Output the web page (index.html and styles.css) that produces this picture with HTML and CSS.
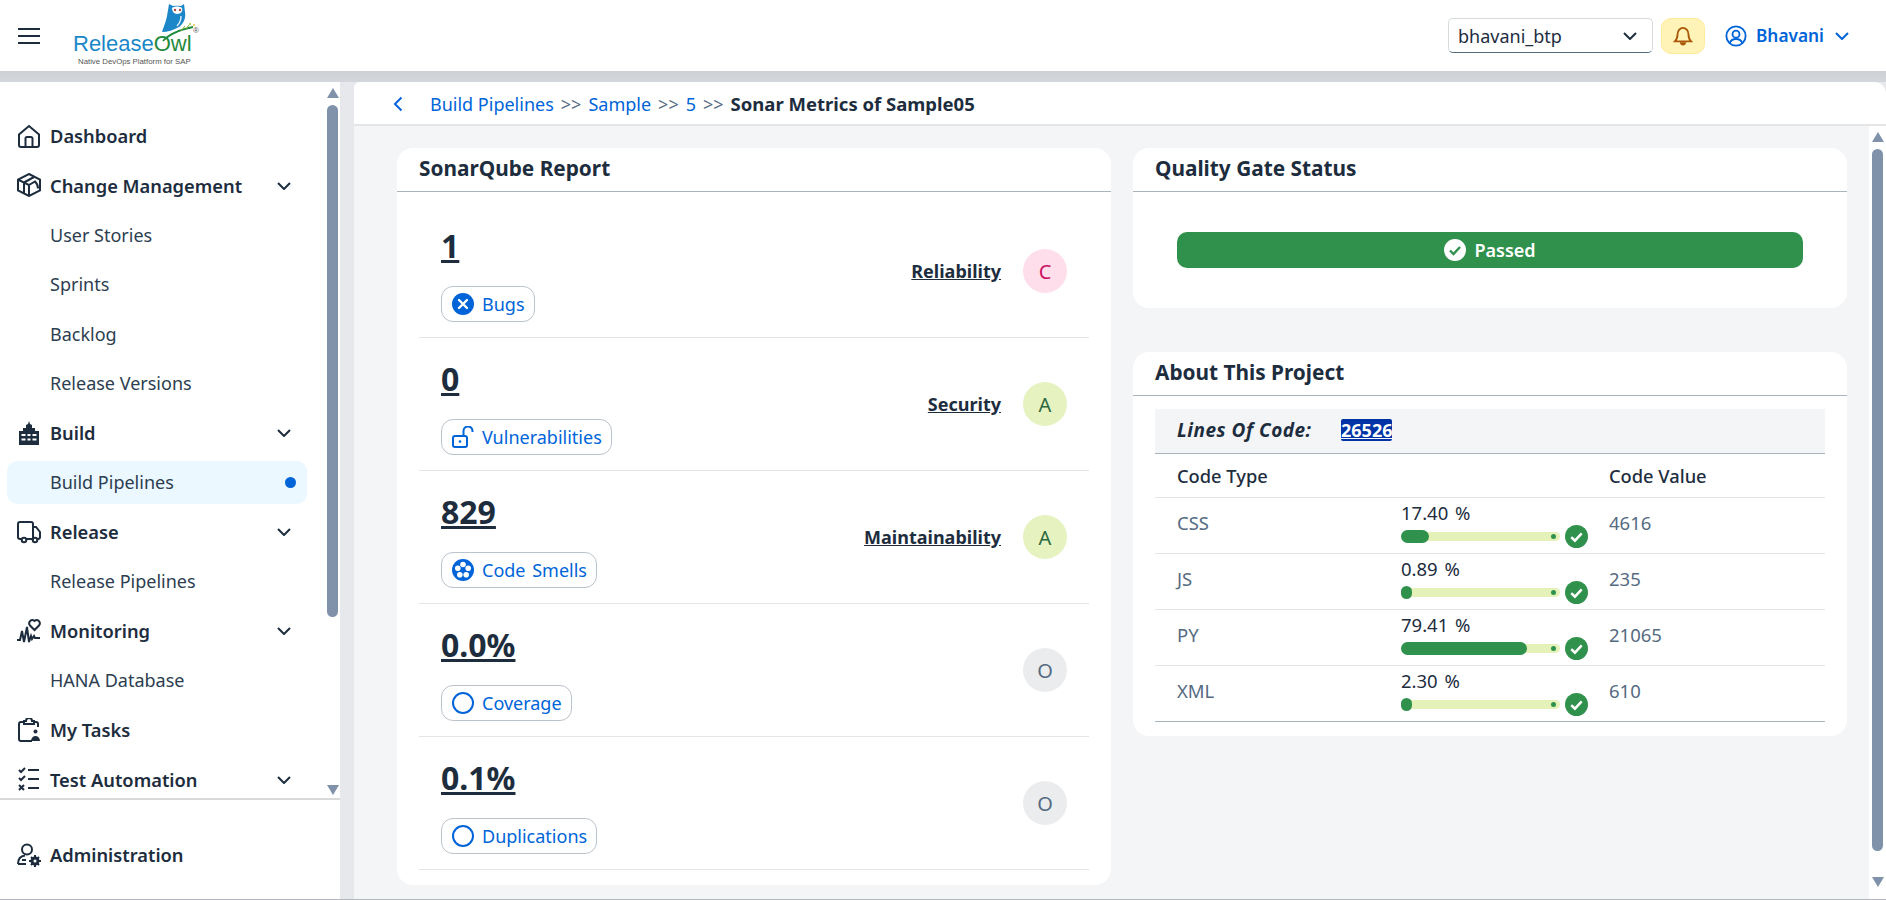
FILE: index.html
```html
<!DOCTYPE html>
<html lang="en">
<head>
    <meta charset="UTF-8">
    <meta name="viewport" content="width=device-width, initial-scale=1.0">
    <title>Sonar Metrics of Sample05</title>
    <link rel="stylesheet" href="styles.css">
</head>
<body>

    <header class="topbar">
        <svg class="hamburger" viewBox="0 0 22 16"><path d="M0 1h22M0 8h22M0 15h22"/></svg>
        <div class="logo">
            <svg class="owl" viewBox="0 0 40 40">
                <path fill="#1b87c9" d="M12 2l4 2c3-.5 6-.5 8 0l3-2 1 8c1 6-1 11-6 15-5 3-12 5-17 5 1-4 4-10 5-16z"/>
                <path fill="#fff" d="M15 6c2-2 8-2 10 0 1 3-1 6-5 6-3 0-5-3-5-6z"/>
                <circle cx="18" cy="8" r="1.200" fill="#b5483a"/>
                <circle cx="23" cy="8" r="1.200" fill="#b5483a"/>
                <path fill="none" stroke="#d6ecf8" stroke-width="1.400" d="M24 14c0 4-1 7-4 10"/>
                <path fill="none" stroke="#1f8a3c" stroke-width="1.800" d="M6 39c6-7 16-11 30-14"/>
                <path fill="none" stroke="#7fb53a" stroke-width="1" d="M24 29l4-5M29 27l3-4"/>
                <circle cx="33" cy="22" r="1" fill="#a6c93a"/>
                <circle cx="37" cy="23" r="1" fill="#e3c93a"/>
            </svg>
            <div class="logo-name"><span class="logo-release">Release</span><span class="logo-owl">Owl</span></div>
            <span class="logo-reg">®</span>
            <div class="logo-tag">Native DevOps Platform for SAP</div>
        </div>
        <div class="topbar-right">
            <div class="tenant">
                <span>bhavani_btp</span>
                <svg class="chev chev-dark" viewBox="0 0 14 8"><path d="M1 1l6 6 6-6"/></svg>
            </div>
            <div class="bell">
                <svg viewBox="0 0 22 24"><path fill="none" stroke="#aa5808" stroke-width="2" d="M2 18h18c-2-2-3-4-3-8 0-4-3-7-6-7s-6 3-6 7c0 4-1 6-3 8z"/><path fill="#aa5808" d="M7.500 19h7c0 2-1.500 3.500-3.500 3.500s-3.500-1.500-3.500-3.500z"/></svg>
            </div>
            <div class="user">
                <svg viewBox="0 0 24 24" fill="none" stroke="#0064d9" stroke-width="2"><circle cx="12" cy="12" r="10.500"/><circle cx="12" cy="10" r="3.800"/><path d="M5 19.500c1.500-3 4-4.200 7-4.200s5.500 1.200 7 4.200"/></svg>
                <span>Bhavani</span>
                <svg class="chev chev-blue" viewBox="0 0 14 8"><path d="M1 1l6 6 6-6"/></svg>
            </div>
        </div>
    </header>
    <div class="topbar-shadow"></div>

    <div class="layout">
        <aside class="sidebar">
            <div class="sidebar-top">
                <nav class="nav">
                    <a class="nav-head">
                        <svg class="nav-icon" viewBox="0 0 24 24"><path d="M2 21V10.500L12 2l10 8.500V21a2 2 0 0 1-2 2H4a2 2 0 0 1-2-2zM8.500 23v-8.500a1.500 1.500 0 0 1 1.500-1.500h4a1.500 1.500 0 0 1 1.500 1.500V23"/></svg>
                        Dashboard
                    </a>
                    <a class="nav-head">
                        <svg class="nav-icon" viewBox="0 0 24 24"><path d="M12 1 23 6.500v11L12 23 1 17.500v-11zM1 6.500 7 9.500v11M7 9.500 17 4M7 9.500l5 2.500v10M12 12l6-3.500c2 2 3 4 3 7"/></svg>
                        Change Management
                        <svg class="chev chev-dark nav-chev" viewBox="0 0 14 8"><path d="M1 1l6 6 6-6"/></svg>
                    </a>
                    <a class="nav-sub">User Stories</a>
                    <a class="nav-sub">Sprints</a>
                    <a class="nav-sub">Backlog</a>
                    <a class="nav-sub">Release Versions</a>
                    <a class="nav-head">
                        <svg class="nav-icon nav-icon-solid" viewBox="0 0 24 24"><path d="M12 0l1 3 2 1v3h3v3h4v14H2V10h4V7h3V4l2-1zM4.500 13v2h4v-2zm6 0v2h3v-2zm5 0v2h4v-2zm-11 4.500v2h4v-2zm6 0v2h3v-2zm5 0v2h4v-2z"/></svg>
                        Build
                        <svg class="chev chev-dark nav-chev" viewBox="0 0 14 8"><path d="M1 1l6 6 6-6"/></svg>
                    </a>
                    <a class="nav-sub nav-active">Build Pipelines<span class="nav-dot"></span></a>
                    <a class="nav-head">
                        <svg class="nav-icon" viewBox="0 0 24 24"><path d="M5 19H3a2 2 0 0 1-2-2V4a2 2 0 0 1 2-2h11a2 2 0 0 1 2 2v15H9M16 7h3l4 5v5a2 2 0 0 1-2 2h-1M12 19h-2"/><circle cx="7" cy="20" r="2.300"/><circle cx="18" cy="20" r="2.300"/></svg>
                        Release
                        <svg class="chev chev-dark nav-chev" viewBox="0 0 14 8"><path d="M1 1l6 6 6-6"/></svg>
                    </a>
                    <a class="nav-sub">Release Pipelines</a>
                    <a class="nav-head">
                        <svg class="nav-icon" viewBox="0 0 24 24"><path d="M0 21h3l2-9 2 11 3-15 2 15 2-6 1 3 2-3 1 2h5M13 6.500c-2.500-3.500 1.500-7 4.500-4.500 3-2.500 7 1 4.500 4.500l-4.500 4.500z"/></svg>
                        Monitoring
                        <svg class="chev chev-dark nav-chev" viewBox="0 0 14 8"><path d="M1 1l6 6 6-6"/></svg>
                    </a>
                    <a class="nav-sub">HANA Database</a>
                    <a class="nav-head">
                        <svg class="nav-icon" viewBox="0 0 24 24"><path d="M15 23H4a2 2 0 0 1-2-2V6a2 2 0 0 1 2-2h3M17 4h2a2 2 0 0 1 2 2v3M7 6V3h2a3 3 0 0 1 6 0h2v3z"/><circle class="nav-fill" cx="18.500" cy="13.500" r="2"/><path class="nav-fill" d="M14 23c0-3 2-5 4.500-5s4.500 2 4.500 5z"/></svg>
                        My Tasks
                    </a>
                    <a class="nav-head">
                        <svg class="nav-icon" viewBox="0 0 24 24"><path d="M2 3l2 2 4-4M11 3h11M2 11l2 2 4-4M11 12h11M2 18l5 5M7 18l-5 5M11 21h11"/></svg>
                        Test Automation
                        <svg class="chev chev-dark nav-chev" viewBox="0 0 14 8"><path d="M1 1l6 6 6-6"/></svg>
                    </a>
                </nav>
                <div class="scroll scroll-nav">
                    <span class="arrow-up"></span>
                    <span class="thumb"></span>
                    <span class="arrow-down"></span>
                </div>
            </div>
            <div class="sidebar-bottom">
                <a class="nav-head">
                    <svg class="nav-icon" viewBox="0 0 24 24"><circle cx="10" cy="6.500" r="5"/><path d="M1 21c0-5 3-8 7-8.500M1 21h8M5 17h4"/><circle class="nav-fill" cx="18" cy="18" r="4.500"/><path d="M18 12v3M18 21v3M12 18h3M21 18h3M14 14l2 2M20 20l2 2M22 14l-2 2M16 20l-2 2"/><circle class="nav-hole" cx="18" cy="18" r="1.500"/></svg>
                    Administration
                </a>
            </div>
        </aside>

        <main class="main">
            <div class="breadcrumb">
                <svg class="back" viewBox="0 0 10 16"><path d="M8.500 1.500 2 8l6.500 6.500"/></svg>
                <a>Build Pipelines</a><span class="crumb-sep">&gt;&gt;</span><a>Sample</a><span class="crumb-sep">&gt;&gt;</span><a>5</a><span class="crumb-sep">&gt;&gt;</span><strong>Sonar Metrics of Sample05</strong>
            </div>
            <div class="main-body">
                <div class="content">
                    <section class="card">
                        <h2 class="card-title">SonarQube Report</h2>
                        <div class="metrics">
                            <div class="metric">
                                <div class="metric-left">
                                    <div class="metric-num">1</div>
                                    <div class="chip">
                                        <svg viewBox="0 0 22 22"><circle cx="11" cy="11" r="11" fill="#0064d9"/><path d="M7 7l8 8M15 7l-8 8" stroke="#fff" stroke-width="2.400" stroke-linecap="round"/></svg>
                                        Bugs
                                    </div>
                                </div>
                                <div class="metric-right">
                                    <span class="metric-label">Reliability</span>
                                    <span class="grade grade-c">C</span>
                                </div>
                            </div>
                            <div class="metric">
                                <div class="metric-left">
                                    <div class="metric-num">0</div>
                                    <div class="chip">
                                        <svg viewBox="0 0 22 22" fill="none" stroke="#0064d9" stroke-width="2"><rect x="1" y="10" width="14" height="11" rx="2"/><circle cx="8" cy="15.500" r="1.300" fill="#0064d9" stroke="none"/><path d="M11.500 10V5a4.500 4.500 0 0 1 9 0v1"/></svg>
                                        Vulnerabilities
                                    </div>
                                </div>
                                <div class="metric-right">
                                    <span class="metric-label">Security</span>
                                    <span class="grade grade-a">A</span>
                                </div>
                            </div>
                            <div class="metric">
                                <div class="metric-left">
                                    <div class="metric-num">829</div>
                                    <div class="chip">
                                        <svg viewBox="0 0 22 22"><circle cx="11" cy="11" r="11" fill="#0064d9"/><circle cx="11" cy="5.500" r="2.800" fill="#fff"/><circle cx="5.800" cy="9.300" r="2.800" fill="#fff"/><circle cx="16.200" cy="9.300" r="2.800" fill="#fff"/><circle cx="7.800" cy="15.700" r="2.800" fill="#fff"/><circle cx="14.200" cy="15.700" r="2.800" fill="#fff"/></svg>
                                        Code Smells
                                    </div>
                                </div>
                                <div class="metric-right">
                                    <span class="metric-label">Maintainability</span>
                                    <span class="grade grade-a">A</span>
                                </div>
                            </div>
                            <div class="metric">
                                <div class="metric-left">
                                    <div class="metric-num">0.0%</div>
                                    <div class="chip">
                                        <svg viewBox="0 0 22 22"><circle cx="11" cy="11" r="10" fill="none" stroke="#0064d9" stroke-width="2"/></svg>
                                        Coverage
                                    </div>
                                </div>
                                <div class="metric-right">
                                    <span class="grade grade-o">O</span>
                                </div>
                            </div>
                            <div class="metric">
                                <div class="metric-left">
                                    <div class="metric-num">0.1%</div>
                                    <div class="chip">
                                        <svg viewBox="0 0 22 22"><circle cx="11" cy="11" r="10" fill="none" stroke="#0064d9" stroke-width="2"/></svg>
                                        Duplications
                                    </div>
                                </div>
                                <div class="metric-right">
                                    <span class="grade grade-o">O</span>
                                </div>
                            </div>
                        </div>
                    </section>

                    <div class="side-col">
                        <section class="card card-gate">
                            <h2 class="card-title">Quality Gate Status</h2>
                            <div class="gate-wrap">
                                <div class="gate">
                                    <svg viewBox="0 0 22 22"><circle cx="11" cy="11" r="11" fill="#fff"/><path d="M6 11.500l3.500 3.500L16 8" fill="none" stroke="#30914c" stroke-width="2.400"/></svg>
                                    Passed
                                </div>
                            </div>
                        </section>

                        <section class="card card-about">
                            <h2 class="card-title">About This Project</h2>
                            <div class="about">
                                <div class="loc">
                                    <em>Lines Of Code:</em>
                                    <span class="loc-val">26526</span>
                                </div>
                                <div class="code-row code-head">
                                    <span>Code Type</span><span></span><span>Code Value</span>
                                </div>
                                <div class="code-row">
                                    <span class="code-cell">CSS</span>
                                    <div class="usage">
                                        <div class="usage-pct">17.40 %</div>
                                        <div class="usage-bar">
                                            <div class="track"><span class="fill" style="width: 28px"></span><span class="track-end"></span></div>
                                            <svg class="ok" viewBox="0 0 22 22"><circle cx="11" cy="11" r="11" fill="#30914c"/><path d="M6 11.500l3.500 3.500L16 8" fill="none" stroke="#fff" stroke-width="2.400"/></svg>
                                        </div>
                                    </div>
                                    <span class="code-cell">4616</span>
                                </div>
                                <div class="code-row">
                                    <span class="code-cell">JS</span>
                                    <div class="usage">
                                        <div class="usage-pct">0.89 %</div>
                                        <div class="usage-bar">
                                            <div class="track"><span class="fill" style="width: 11px"></span><span class="track-end"></span></div>
                                            <svg class="ok" viewBox="0 0 22 22"><circle cx="11" cy="11" r="11" fill="#30914c"/><path d="M6 11.500l3.500 3.500L16 8" fill="none" stroke="#fff" stroke-width="2.400"/></svg>
                                        </div>
                                    </div>
                                    <span class="code-cell">235</span>
                                </div>
                                <div class="code-row">
                                    <span class="code-cell">PY</span>
                                    <div class="usage">
                                        <div class="usage-pct">79.41 %</div>
                                        <div class="usage-bar">
                                            <div class="track"><span class="fill" style="width: 126px"></span><span class="track-end"></span></div>
                                            <svg class="ok" viewBox="0 0 22 22"><circle cx="11" cy="11" r="11" fill="#30914c"/><path d="M6 11.500l3.500 3.500L16 8" fill="none" stroke="#fff" stroke-width="2.400"/></svg>
                                        </div>
                                    </div>
                                    <span class="code-cell">21065</span>
                                </div>
                                <div class="code-row code-last">
                                    <span class="code-cell">XML</span>
                                    <div class="usage">
                                        <div class="usage-pct">2.30 %</div>
                                        <div class="usage-bar">
                                            <div class="track"><span class="fill" style="width: 11px"></span><span class="track-end"></span></div>
                                            <svg class="ok" viewBox="0 0 22 22"><circle cx="11" cy="11" r="11" fill="#30914c"/><path d="M6 11.500l3.500 3.500L16 8" fill="none" stroke="#fff" stroke-width="2.400"/></svg>
                                        </div>
                                    </div>
                                    <span class="code-cell">610</span>
                                </div>
                            </div>
                        </section>
                    </div>
                </div>
                <div class="scroll scroll-main">
                    <span class="arrow-up"></span>
                    <span class="thumb"></span>
                    <span class="arrow-down"></span>
                </div>
            </div>
        </main>
    </div>

</body>
</html>
```

FILE: styles.css
```css
* { box-sizing: border-box; }
html { height: 900px; overflow: hidden; }
body {
    margin: 0;
    height: 900px;
    overflow: hidden;
    display: flex;
    flex-direction: column;
    font-family: "Noto Sans", "Liberation Sans", sans-serif;
    font-size: 18px;
    color: #1d2d3e;
    background-color: #e6e8eb;
    border-bottom: 1px solid #b4b6bd;
}

/* top bar */
.topbar {
    height: 71px;
    flex: none;
    display: flex;
    align-items: center;
    background-color: #fff;
    padding: 0 37px 0 18px;
}
.hamburger { width: 22px; height: 16px; fill: none; stroke: #1d2d3e; stroke-width: 2; }
.logo { position: relative; width: 124px; height: 71px; margin-left: 33px; }
.owl { position: absolute; left: 84px; top: 2px; width: 40px; height: 40px; }
.logo-name { position: absolute; left: 0; top: 31px; font-family: "Liberation Sans", sans-serif; font-size: 22px; line-height: 26px; white-space: nowrap; }
.logo-release { color: #1b87c9; }
.logo-owl { color: #1f8a3c; }
.logo-reg { position: absolute; left: 120px; top: 26px; font-family: "Liberation Sans", sans-serif; font-size: 8px; line-height: 10px; color: #555; }
.logo-tag { position: absolute; left: 5px; top: 57px; font-family: "Liberation Sans", sans-serif; font-size: 7.800px; line-height: 10px; color: #555; white-space: nowrap; }
.topbar-right { margin-left: auto; display: flex; align-items: center; }
.tenant {
    width: 205px;
    height: 35px;
    display: flex;
    align-items: center;
    justify-content: space-between;
    padding: 0 15px 0 9px;
    border: 1px solid #d5dadd;
    border-bottom-color: #556b82;
    border-radius: 5px;
}
.bell {
    width: 44px;
    height: 36px;
    margin-left: 8px;
    display: flex;
    align-items: center;
    justify-content: center;
    background-color: #fff3b8;
    border: 1px solid #ffeb99;
    border-radius: 10px;
}
.bell svg { width: 20px; height: 22px; }
.user { display: flex; align-items: center; margin-left: 20px; color: #0064d9; font-weight: 600; font-size: 17.300px; }
.user svg:first-child { width: 22px; height: 22px; margin-right: 9px; }
.user .chev { margin-left: 11px; }
.chev { width: 14px; height: 8px; fill: none; stroke-width: 2; flex: none; }
.chev-dark { stroke: #1d2d3e; }
.chev-blue { stroke: #0064d9; }
.topbar-shadow { height: 11px; flex: none; background: linear-gradient(#cdd1d6, #d3d7dc); }

.layout { flex: 1; min-height: 0; display: flex; }

/* left menu */
.sidebar { width: 340px; flex: none; display: flex; flex-direction: column; background-color: #fff; }
.sidebar-top { height: 718px; flex: none; display: flex; border-bottom: 2px solid #d9d9d9; }
.nav { flex: 1; padding-top: 29px; overflow: hidden; }
.nav-head, .nav-sub {
    height: 49.500px;
    display: flex;
    align-items: center;
    padding-left: 50px;
    position: relative;
}
.nav-head { font-weight: 600; font-size: 18.300px; padding-left: 17px; }
.nav-sub { color: #2c3e50; }
.nav-icon { width: 24px; height: 24px; flex: none; margin-right: 9px; fill: none; stroke: #1d2d3e; stroke-width: 2; }
.nav-icon-solid { fill: #1d2d3e; stroke: none; fill-rule: evenodd; }
.nav-fill { fill: #1d2d3e; stroke: none; }
.nav-hole { fill: #fff; stroke: none; }
.nav-chev { position: absolute; left: 277px; top: 21px; }
.nav-active { isolation: isolate; }
.nav-active::before {
    content: "";
    position: absolute;
    left: 7px;
    right: 18px;
    top: 3px;
    bottom: 3px;
    background-color: #ebf8ff;
    border-radius: 10px;
    z-index: -1;
}
.nav-dot { position: absolute; left: 285px; top: 19px; width: 11px; height: 11px; border-radius: 50%; background-color: #0064d9; }
.sidebar-bottom { padding-top: 30px; }

/* scrollbars drawn by the app */
.scroll { display: flex; flex-direction: column; align-items: center; flex: none; }
.thumb { width: 11px; background-color: #7f92aa; border-radius: 6px; }
.arrow-up, .arrow-down { width: 0; height: 0; border-left: 6px solid transparent; border-right: 6px solid transparent; }
.arrow-up { border-bottom: 10px solid #7f92aa; }
.arrow-down { border-top: 10px solid #7f92aa; }
.scroll-nav { width: 15px; padding-top: 6px; }
.scroll-nav .thumb { height: 512px; margin-top: 7px; }
.scroll-nav .arrow-down { margin-top: 168px; }
.scroll-main { width: 17px; background-color: #fff; padding-top: 6px; }
.scroll-main .thumb { height: 702px; margin-top: 7px; }
.scroll-main .arrow-down { margin-top: 26px; }

/* main panel */
.main {
    flex: 1;
    min-width: 0;
    margin-left: 14px;
    display: flex;
    flex-direction: column;
    background-color: #f4f5f7;
    border-top-right-radius: 12px;
    border-top-left-radius: 6px;
}
.breadcrumb {
    height: 44px;
    flex: none;
    display: flex;
    align-items: center;
    padding: 1px 0 0 39px;
    background-color: #fff;
    border-bottom: 2px solid #e4e5e7;
    border-top-right-radius: 12px;
    border-top-left-radius: 6px;
}
.back { width: 10px; height: 16px; margin-right: 27px; fill: none; stroke: #0064d9; stroke-width: 2; }
.breadcrumb a { color: #0064d9; }
.crumb-sep { color: #556b82; margin: 0 7px; }
.breadcrumb strong { font-weight: 700; font-size: 18.500px; }
.main-body { flex: 1; min-height: 0; display: flex; }
.content {
    flex: 1;
    min-width: 0;
    display: grid;
    grid-template-columns: 714px 714px;
    gap: 22px;
    padding: 22px 22px 0 43px;
    align-items: start;
}
.card { background-color: #fff; border-radius: 16px; overflow: hidden; }
.card-title {
    margin: 0;
    height: 44px;
    padding: 0 22px;
    font-size: 20.800px;
    line-height: 41px;
    font-weight: 700;
    border-bottom: 1px solid #a9b4be;
}
.metrics { padding: 13px 22px 15px; }
.metric {
    height: 133px;
    display: flex;
    align-items: center;
    justify-content: space-between;
    padding: 0 22px;
    border-bottom: 1px solid #e5e5e5;
}
.metric-left { padding-top: 7px; }
.metric-num {
    font-size: 32px;
    line-height: 36px;
    font-weight: 700;
    text-decoration: underline;
    margin-bottom: 22px;
}
.chip {
    display: flex;
    width: fit-content;
    align-items: center;
    height: 36px;
    padding: 0 9px 0 10px;
    color: #0064d9;
    word-spacing: 2px;
    border: 1px solid #bcc3ca;
    border-radius: 12px;
}
.chip svg { width: 22px; height: 22px; margin-right: 8px; }
.metric-right { display: flex; align-items: center; gap: 22px; }
.metric-label { font-weight: 700; text-decoration: underline; }
.grade {
    width: 44px;
    height: 44px;
    display: flex;
    align-items: center;
    justify-content: center;
    font-size: 20px;
    border-radius: 50%;
}
.grade-c { color: #cc1166; background-color: #ffdeeb; }
.grade-a { color: #2b6a3f; background-color: #e6f2bf; }
.grade-o { color: #556b82; background-color: #eaecee; }

.side-col { display: flex; flex-direction: column; gap: 44px; }
.gate-wrap { padding: 40px 44px; height: 116px; }
.gate {
    height: 36px;
    display: flex;
    align-items: center;
    justify-content: center;
    color: #fff;
    font-weight: 600;
    background-color: #30914c;
    border-radius: 10px;
}
.gate svg { width: 22px; height: 22px; margin-right: 8px; }
.about { padding: 13px 22px 14px; }
.loc {
    height: 45px;
    display: flex;
    align-items: center;
    padding: 0 0 2px 22px;
    background-color: #f4f5f7;
    border-bottom: 1px solid #a9b4be;
}
.loc em { font-weight: 700; font-size: 19px; letter-spacing: 0.500px; width: 164px; }
.loc-val {
    color: #fff;
    background-color: #0033a6;
    font-weight: 700;
    line-height: 22px;
    text-decoration: underline;
    border-radius: 2px;
}
.code-row {
    display: grid;
    grid-template-columns: 224px 208px 1fr;
    align-items: center;
    height: 56px;
    padding-left: 22px;
    border-bottom: 1px solid #e5e5e5;
}
.code-head { height: 44px; font-weight: 500; font-size: 18.300px; }
.code-last { border-bottom-color: #a9b4be; }
.code-cell { color: #556b82; font-size: 18.500px; padding-bottom: 7px; }
.usage { align-self: start; width: 188px; padding-top: 4px; }
.usage-pct { line-height: 22px; font-size: 18.500px; word-spacing: 2px; }
.usage-bar { display: flex; align-items: center; gap: 5px; margin-top: 1px; height: 22px; }
.track {
    width: 159px;
    height: 9px;
    display: flex;
    align-items: center;
    justify-content: space-between;
    background-color: #e4f2b8;
    border-radius: 5px;
    padding-right: 4px;
}
.fill { height: 13px; background-color: #30914c; border-radius: 7px; }
.track-end { width: 5px; height: 5px; border-radius: 50%; background-color: #30914c; }
.ok { width: 23px; height: 23px; flex: none; }
```
